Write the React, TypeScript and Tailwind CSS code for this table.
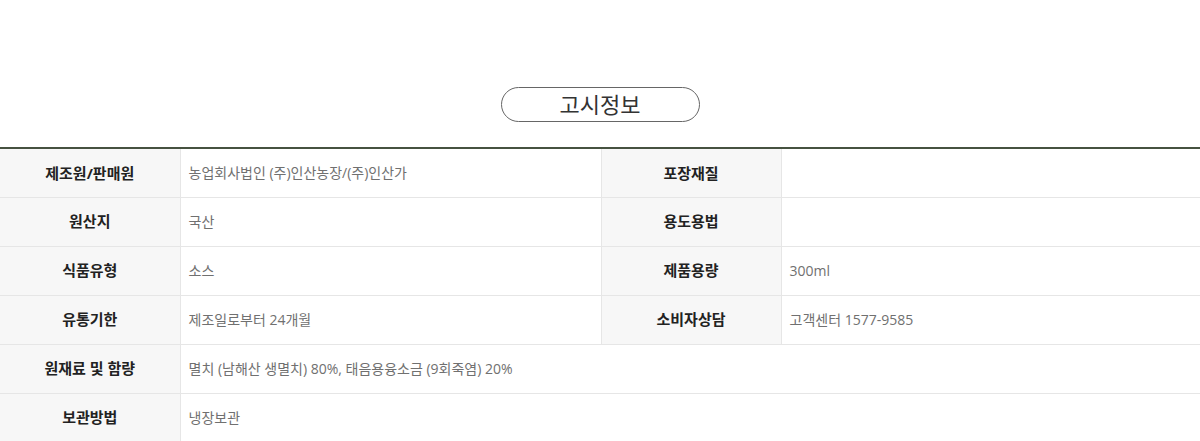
const font = "font-['Open_Sans','Noto_Sans_CJK_KR',sans-serif]";

type Row = { label: string; value: string; label2?: string; value2?: string };

const rows: Row[] = [
  { label: "제조원/판매원", value: "농업회사법인 (주)인산농장/(주)인산가", label2: "포장재질", value2: "" },
  { label: "원산지", value: "국산", label2: "용도용법", value2: "" },
  { label: "식품유형", value: "소스", label2: "제품용량", value2: "300ml" },
  { label: "유통기한", value: "제조일로부터 24개월", label2: "소비자상담", value2: "고객센터 1577-9585" },
  { label: "원재료 및 함량", value: "멸치 (남해산 생멸치) 80%, 태음용융소금 (9회죽염) 20%" },
  { label: "보관방법", value: "냉장보관" },
];

function Th({ children }: { children: React.ReactNode }) {
  return (
    <th className="h-[49px] border border-[#e6e6e6] bg-[#f7f7f7] text-center text-[15px] font-bold text-[#222] first:border-l-0">
      {children}
    </th>
  );
}

function Td({ children, span }: { children: React.ReactNode; span?: number }) {
  return (
    <td colSpan={span} className="h-[49px] border border-[#e6e6e6] bg-white px-[8px] text-left text-[14px] text-[#707070] last:border-r-0">
      {children}
    </td>
  );
}

export default function App() {
  return (
    <div className={`${font} w-[1200px] bg-white pt-[87px]`}>
      <div className="flex justify-center">
        <div className="flex h-[35px] w-[199px] items-center justify-center rounded-full border border-[#666] text-[22px] text-[#333]">
          고시정보
        </div>
      </div>
      <table className="mt-[25px] w-full table-fixed border-collapse border-t-2 border-t-[#465240]">
        <colgroup>
          <col className="w-[180px]" />
          <col className="w-[421px]" />
          <col className="w-[180px]" />
          <col />
        </colgroup>
        <tbody>
          {rows.map((r) => (
            <tr key={r.label}>
              <Th>{r.label}</Th>
              {r.label2 !== undefined ? (
                <>
                  <Td>{r.value}</Td>
                  <Th>{r.label2}</Th>
                  <Td>{r.value2}</Td>
                </>
              ) : (
                <Td span={3}>{r.value}</Td>
              )}
            </tr>
          ))}
        </tbody>
      </table>
    </div>
  );
}
